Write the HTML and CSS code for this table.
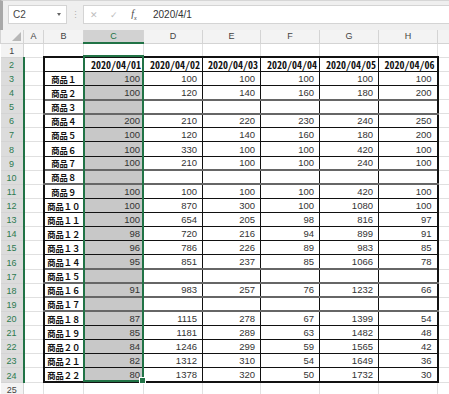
FILE: index.html
```html
<!DOCTYPE html>
<html>
<head>
  <meta charset="utf-8">
  <title>Sheet1</title>
<link rel="stylesheet" href="styles.css">
</head>

<body>

<div class='formula-bar'>
  <div class='name-box'><span>C2</span><span class='caret'></span></div>
  <div class='grip'>&#8942;</div>
  <div class='formula'>
    <div class='fx-buttons'>
      <span class='btn off'>&#10005;</span>
      <span class='btn off'>&#10003;</span>
      <span class='btn fx'>f<sub>x</sub></span>
    </div>
    <div class='formula-input'>2020/4/1</div>
  </div>
</div>

<div class='sheet'>
  <table class='grid'>
    <colgroup>
      <col class='w-rh'><col class='w-a'><col class='w-b'><col class='w-c'>
      <col class='w-d'><col class='w-e'><col class='w-d'><col class='w-d'><col class='w-d'><col class='w-i'>
    </colgroup>
    <thead>
      <tr>
        <th class='corner'><span class='tri'></span></th>
        <th>A</th><th>B</th><th class='sel'>C</th><th>D</th><th>E</th><th>F</th><th>G</th><th>H</th><th></th>
      </tr>
    </thead>
    <tbody id='rows'></tbody>
  </table>
  <div class='selection'></div>
</div>

<script>
  var dates = ['2020/04/01', '2020/04/02', '2020/04/03', '2020/04/04', '2020/04/05', '2020/04/06'];
  var data = [
    [100, 100, 100, 100, 100, 100],
    [100, 120, 140, 160, 180, 200],
    null,
    [200, 210, 220, 230, 240, 250],
    [100, 120, 140, 160, 180, 200],
    [100, 330, 100, 100, 420, 100],
    [100, 210, 100, 100, 240, 100],
    null,
    [100, 100, 100, 100, 420, 100],
    [100, 870, 300, 100, 1080, 100],
    [100, 654, 205, 98, 816, 97],
    [98, 720, 216, 94, 899, 91],
    [96, 786, 226, 89, 983, 85],
    [95, 851, 237, 85, 1066, 78],
    null,
    [91, 983, 257, 76, 1232, 66],
    null,
    [87, 1115, 278, 67, 1399, 54],
    [85, 1181, 289, 63, 1482, 48],
    [84, 1246, 299, 59, 1565, 42],
    [82, 1312, 310, 54, 1649, 36],
    [80, 1378, 320, 50, 1732, 30]
  ];

  // 全角数字に変換
  function wide(n) {
    return String(n).replace(/[0-9]/g, function(c) {
      return String.fromCharCode(c.charCodeAt(0) + 0xFEE0);
    });
  }

  function emptyRow(no) {
    var html = "<tr><th class='rh'>" + no + "</th>";
    for (var i = 0; i < 9; i++) html += '<td></td>';
    return html + '</tr>';
  }

  var html = emptyRow(1);

  html += "<tr class='top'><th class='rh sel'>2</th><td></td><td class='tb first'></td>";
  dates.forEach(function(d, i) {
    html += "<td class='tb date" + (i == 0 ? ' active' : '') + (i == 5 ? ' last' : '') + "'>" + d + '</td>';
  });
  html += '<td></td></tr>';

  data.forEach(function(vals, r) {
    var cls = [];
    if (!vals) cls.push('gap');
    if (r == data.length - 1) cls.push('bottom');
    html += "<tr class='" + cls.join(' ') + "'><th class='rh sel'>" + (r + 3) + '</th><td></td>';
    html += "<td class='tb first name'>商品" + wide(r + 1) + '</td>';
    for (var i = 0; i < 6; i++) {
      var c = 'tb num' + (i == 0 ? ' c' : '') + (i == 5 ? ' last' : '');
      html += "<td class='" + c + "'>" + (vals ? vals[i] : '') + '</td>';
    }
    html += '<td></td></tr>';
  });

  html += emptyRow(25);
  document.getElementById('rows').innerHTML = html;
</script>
</body>
</html>
```

FILE: styles.css
```css
* {
  box-sizing: border-box;
}
html, body {
  margin: 0;
  background: #fff;
}
body {
  width: 449px;
  height: 394px;
  overflow: hidden;
  font-family: 'Liberation Sans', Arial, sans-serif;
  font-size: 10px;
  color: #333;
}

/* formula bar */
.formula-bar {
  display: flex;
  align-items: center;
  height: 30px;
  padding: 4px 0 6px 5px;
  background: #efefef;
  border-top: 1px solid #d6d6d6;
  border-left: 3px solid #a8a8a8;
}
.name-box {
  display: flex;
  align-items: center;
  justify-content: space-between;
  width: 59px;
  height: 19px;
  padding: 0 5px 0 4px;
  background: #fff;
  border: 1px solid #d4d4d4;
  color: #444;
}
.caret {
  width: 0;
  height: 0;
  border-left: 2.5px solid transparent;
  border-right: 2.5px solid transparent;
  border-top: 3px solid #666;
}
.grip {
  width: 16px;
  text-align: center;
  color: #b0b0b0;
  font-size: 9px;
}
.formula {
  flex: 1;
  display: flex;
  align-items: center;
  height: 19px;
  background: #fff;
  border: 1px solid #d4d4d4;
  border-right: none;
}
.fx-buttons {
  display: flex;
  width: 62px;
  height: 100%;
  align-items: center;
}
.btn {
  width: 20px;
  text-align: center;
  font-size: 9px;
}
.btn.off {
  color: #bdbdbd;
}
.btn.fx {
  font-family: 'Liberation Serif', serif;
  font-style: italic;
  color: #444;
  font-size: 10px;
}
.btn.fx sub {
  font-size: 6px;
}
.formula-input {
  padding-left: 7px;
  color: #333;
}

/* grid */
.sheet {
  position: relative;
}
.grid {
  border-collapse: collapse;
  table-layout: fixed;
  width: 467px;
}
.w-rh { width: 23px; }
.w-a { width: 20px; }
.w-b { width: 40px; }
.w-c { width: 60px; }
.w-d { width: 59px; }
.w-e { width: 58px; }
.w-i { width: 30px; }

.grid th,
.grid td {
  padding: 0;
  height: 14.13px;
  border: 1px solid #e0e0e0;
  white-space: nowrap;
  overflow: hidden;
  vertical-align: bottom;
  line-height: 12px;
}
.grid thead th {
  height: 13px;
  background: #f3f3f3;
  border-color: #d4d4d4;
  border-top: none;
  font-weight: normal;
  font-size: 9px;
  color: #444;
  vertical-align: middle;
}
.grid thead th.sel {
  background: #d2d2d2;
  color: #217346;
  border-bottom: 2px solid #217346;
}
.corner {
  position: relative;
}
.tri {
  position: absolute;
  right: 2px;
  bottom: 2px;
  width: 0;
  height: 0;
  border-left: 9px solid transparent;
  border-bottom: 9px solid #b8b8b8;
}
.grid .rh {
  background: #f3f3f3;
  border-color: #d4d4d4;
  border-left: none;
  font-weight: normal;
  font-size: 9px;
  color: #444;
  text-align: center;
}
.grid .rh.sel {
  background: #dcdcdc;
  color: #2c7a4f;
  border-right: 2px solid #217346;
}

/* table range B2:H24 */
.grid td.tb {
  border: 1px solid #111;
}
.grid td.first {
  border-left: 2px solid #111;
}
.grid td.last {
  border-right: 2px solid #111;
}
.grid .top td.tb {
  border-top: 2px solid #111;
}
.grid .bottom td.tb {
  border-bottom: 2px solid #111;
}
.grid .gap td.tb {
  border-top: 2px solid #666;
  border-bottom: 2px solid #666;
}
.grid td.date {
  text-align: right;
  padding-right: 2px;
  font-family: 'Noto Sans Mono CJK JP', 'Noto Sans CJK JP', monospace;
  font-weight: bold;
  font-size: 10px;
  color: #111;
}
.grid td.name {
  text-align: center;
  font-family: 'Noto Sans CJK JP', sans-serif;
  font-weight: bold;
  font-size: 8.3px;
  color: #111;
}
.grid td.num {
  text-align: right;
  padding-right: 5px;
  font-size: 9.5px;
  color: #333;
}
.grid td.num.c {
  padding-right: 3px;
  background: #c8c8c8;
}

/* selection C2:C24 */
.selection {
  position: absolute;
  left: 83px;
  top: 25px;
  width: 61px;
  height: 327px;
  border: 2px solid #217346;
  pointer-events: none;
}
.selection::after {
  content: '';
  position: absolute;
  right: -4px;
  bottom: -4px;
  width: 5px;
  height: 5px;
  background: #217346;
  border: 1px solid #fff;
}
```
